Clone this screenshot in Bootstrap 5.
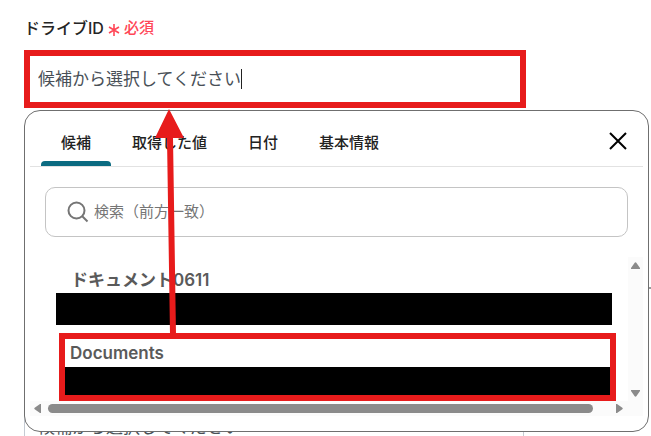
<!DOCTYPE html>
<html lang="ja">
<head>
<meta charset="utf-8">
<meta name="viewport" content="width=device-width, initial-scale=1">
<title>ドライブID</title>
<link href="https://cdn.jsdelivr.net/npm/bootstrap@5.3.0/dist/css/bootstrap.min.css" rel="stylesheet">
<style>
body{font-family:Inter,"Noto Sans CJK JP",sans-serif;color:#252525;background:#fff}
.page{height:100vh;padding:16px 2px 0 24px}
.field-label{font-size:16px;line-height:24px;font-weight:500}
.required{font-size:15px;color:#ff4757}
.field-box{max-width:502px;height:58px;padding:0 8px}
.picked{border:6px solid #e71b1b;margin-top:10px}
.plain{border:1px solid #c5cbd3;max-width:500px;padding:0 13px;margin-top:290px}
.field-box input{font-size:17px;line-height:24px;color:#495057;outline:0}
.picked input{width:203px}
.caret{width:1px;height:20px;background:#222}
.panel{top:110px;left:24px;right:2px;border:1px solid #6f6f6f;border-radius:16px;padding:0 5px 15px}
.tabs{height:56px;border-bottom:1px solid #e2e2e2;padding-left:11px;padding-right:14px;gap:1px}
.tabs .tab{font-size:15px;line-height:24px;font-weight:500;color:#222;padding:8px 20px 0;height:55px;position:relative}
.tabs .tab.active::after{content:"";position:absolute;left:0;right:0;bottom:0;height:5px;background:#0b6b81;border-radius:4px 4px 0 0}
.search{height:50px;margin:20px 15px 0;border:1px solid #c4c4c4;border-radius:10px;padding:0 20px;gap:4px}
.search input{font-size:15px;line-height:24px}
.search input::placeholder{color:#757575;opacity:1}
.results{margin-top:20px}
.list{padding:8px 16px 0 26px}
.item{font-size:17px;line-height:24px;font-weight:600;color:#5a5a5a}
.item .name{padding:3px 0 1px 15px}
.redacted{height:32px;background:#000}
.item.chosen{border:6px solid #e71b1b;margin:8px -4px 0 3px}
.item.chosen .name{padding:2px 0 2px 5px}
.chosen .redacted{height:28px}
.track{background:#fbfbfb}
.vtrack{width:15px;padding:5px 0 4px}
.htrack{height:15px;padding:0 20px 0 4px;gap:7px}
.thumb{height:9px;border-radius:5px;background:#8b8b8b}
.arrow{left:152px;top:108px}
.peek{left:649px;top:287px;width:2px;height:2px;background:#999}
</style>
<script src="https://cdn.jsdelivr.net/npm/bootstrap@5.3.0/dist/js/bootstrap.bundle.min.js"></script>
</head>
<body>
<main class="page position-relative overflow-hidden">
  <label class="field-label d-flex align-items-center" for="drive">ドライブID
    <svg class="ms-1 mt-1" width="12" height="14" viewBox="0 0 12 14" stroke="#ff4757" stroke-width="1.600" aria-hidden="true"><path d="M6 1v12M1 4l10 6M11 4L1 10"/></svg>
    <span class="required ms-1">必須</span></label>
  <div class="field-box picked d-flex align-items-center">
    <input id="drive" class="border-0 p-0 bg-transparent" type="text" value="候補から選択してください">
    <span class="caret"></span>
  </div>
  <div class="field-box plain d-flex align-items-center">
    <input class="border-0 p-0 bg-transparent w-100" type="text" aria-label="次の項目" value="候補から選択してください">
  </div>

  <section class="panel position-absolute bg-white">
    <div class="tabs d-flex align-items-center" role="tablist">
      <button class="tab active border-0 bg-transparent" role="tab" type="button">候補</button>
      <button class="tab border-0 bg-transparent" role="tab" type="button">取得した値</button>
      <button class="tab border-0 bg-transparent" role="tab" type="button">日付</button>
      <button class="tab border-0 bg-transparent" role="tab" type="button">基本情報</button>
      <button class="border-0 bg-transparent p-0 ms-auto d-flex pt-1" type="button" aria-label="閉じる"><svg width="22" height="22" viewBox="0 0 22 22" stroke="#000" stroke-width="2"><path d="M3 3l16 16M19 3L3 19"/></svg></button>
    </div>
    <div class="search d-flex align-items-center">
      <svg class="flex-shrink-0" width="24" height="24" viewBox="0 0 24 24" fill="none" stroke="#757575" stroke-width="2"><circle cx="10.500" cy="10.500" r="8"/><path d="M16 16l5.500 5.500"/></svg>
      <input class="border-0 p-0 bg-transparent flex-grow-1" type="text" aria-label="検索" placeholder="検索（前方一致）">
    </div>
    <div class="results d-flex">
      <div class="list flex-grow-1">
        <div class="item"><div class="name">ドキュメント0611</div><div class="redacted"></div></div>
        <div class="item chosen"><div class="name">Documents</div><div class="redacted"></div></div>
      </div>
      <div class="track vtrack d-flex flex-column justify-content-between align-items-center">
        <svg width="9" height="7" viewBox="0 0 9 7"><path d="M3.500 1Q4.500-.5 5.500 1L9 6V7H0V6z" fill="#8b8b8b"/></svg>
        <svg width="9" height="7" viewBox="0 0 9 7"><path d="M3.500 6Q4.500 7.500 5.500 6L9 1V0H0V1z" fill="#8b8b8b"/></svg>
      </div>
    </div>
    <div class="track htrack d-flex align-items-center">
      <svg width="7" height="9" viewBox="0 0 7 9"><path d="M1 3.500Q-.5 4.500 1 5.500L6 9H7V0H6z" fill="#8b8b8b"/></svg>
      <div class="thumb flex-grow-1"></div>
      <svg class="ms-3" width="7" height="9" viewBox="0 0 7 9"><path d="M6 3.500Q7.500 4.500 6 5.500L1 9H0V0H1z" fill="#8b8b8b"/></svg>
    </div>
  </section>
  <span class="peek position-absolute"></span>
  <svg class="arrow position-absolute pe-none" width="34" height="230" viewBox="0 0 34 230" fill="#e71b1b" aria-hidden="true"><path d="M17 1L32 30H21L24 227H18L15 30H3z"/></svg>
</main>
</body>
</html>
